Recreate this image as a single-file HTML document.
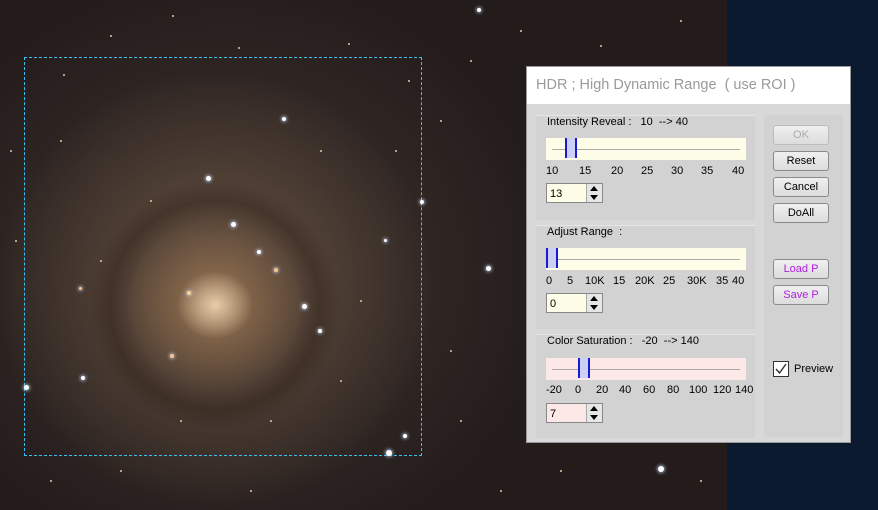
<!DOCTYPE html>
<html><head><meta charset="utf-8"><style>
body{margin:0;width:878px;height:510px;overflow:hidden;position:relative;font-family:"Liberation Sans",sans-serif;}
#bg{position:absolute;left:0;top:0;width:727px;height:510px;background:
radial-gradient(ellipse 38px 34px at 215px 305px,rgba(240,215,180,.9),rgba(0,0,0,0)),
radial-gradient(ellipse 90px 85px at 215px 305px,rgba(165,125,85,.75),rgba(0,0,0,0)),
radial-gradient(circle 140px at 215px 305px,rgba(0,0,0,0) 60%,rgba(40,25,18,.35) 75%,rgba(0,0,0,0) 90%),
radial-gradient(ellipse 220px 220px at 215px 290px,rgba(120,95,72,.7),rgba(0,0,0,0)),
radial-gradient(ellipse 330px 300px at 230px 270px,rgba(80,65,58,.7),rgba(0,0,0,0)),
#231c1b;}
#right{position:absolute;left:727px;top:0;width:151px;height:510px;background:#0b1a2e;}
#roi{position:absolute;left:24px;top:57px;width:396px;height:397px;border:1px dashed #3ac0f0;}
.s{position:absolute;border-radius:50%;background:#fff;box-shadow:0 0 3px 1px rgba(200,220,255,.7);}
.d{position:absolute;width:2px;height:2px;border-radius:50%;background:#e8c8a0;}
#dlg{position:absolute;left:526px;top:66px;width:325px;height:377px;background:#d8d8d8;border:1px solid #999;box-sizing:border-box;font-size:11px;color:#000;}
#title{position:absolute;left:0;top:0;width:100%;height:37px;background:#fff;color:#9a9a9a;font-size:14.5px;line-height:37px;padding-left:9px;box-sizing:border-box;}
.grp{position:absolute;left:9px;width:219px;background:#d2d2d2;border-top:1px solid #e6e6e6;}
.lbl{position:absolute;left:11px;top:0px;font-size:11px;}
.trk{position:absolute;left:10px;width:200px;height:22px;}
.trk .ln{position:absolute;left:6px;right:6px;top:11px;height:1px;background:#aaa;}
.trk .th{position:absolute;top:0;width:8px;height:20px;background:#cdd0f5;border-left:2px solid #1a1ad0;border-right:2px solid #1a1ad0;}
.nums{position:absolute;left:10px;width:200px;font-size:11px;}
.nums span{position:absolute;}
.spin{position:absolute;left:10px;width:57px;height:20px;border:1px solid #888;font-size:11px;line-height:20px;padding-left:3px;box-sizing:border-box;}
.spin .b{position:absolute;right:0;top:0;width:15px;height:18px;background:#e6e6e6;border-left:1px solid #aaa;}
.spin .b:before{content:"";position:absolute;left:3px;top:2px;border:4px solid transparent;border-bottom:5px solid #000;border-top:0;}
.spin .b:after{content:"";position:absolute;left:3px;top:11px;border:4px solid transparent;border-top:5px solid #000;border-bottom:0;}
#rp{position:absolute;left:237px;top:48px;width:79px;height:322px;background:#d2d2d2;}
.btn{position:absolute;left:9px;width:54px;height:18px;border:1px solid #8a8a8a;border-radius:3px;background:linear-gradient(#f0f0f0,#dcdcdc);text-align:center;line-height:18px;font-size:11px;}
</style></head><body>
<div id="bg"></div><div id="right"></div>
<div id="roi"></div>
<div class="s" style="left:206px;top:176px;width:5px;height:5px"></div>
<div class="s" style="left:231px;top:222px;width:5px;height:5px"></div>
<div class="s" style="left:257px;top:250px;width:4px;height:4px"></div>
<div class="s" style="left:302px;top:304px;width:5px;height:5px"></div>
<div class="s" style="left:24px;top:385px;width:5px;height:5px"></div>
<div class="s" style="left:386px;top:450px;width:6px;height:6px"></div>
<div class="s" style="left:486px;top:266px;width:5px;height:5px"></div>
<div class="s" style="left:658px;top:466px;width:6px;height:6px"></div>
<div class="s" style="left:477px;top:8px;width:4px;height:4px"></div>
<div class="s" style="left:420px;top:200px;width:4px;height:4px"></div>
<div class="s" style="left:282px;top:117px;width:4px;height:4px"></div>
<div class="s" style="left:318px;top:329px;width:4px;height:4px"></div>
<div class="s" style="left:403px;top:434px;width:4px;height:4px"></div>
<div class="s" style="left:384px;top:239px;width:3px;height:3px"></div>
<div class="s" style="left:81px;top:376px;width:4px;height:4px"></div>
<div class="s" style="left:170px;top:354px;width:4px;height:4px;background:#ffc080"></div>
<div class="s" style="left:274px;top:268px;width:4px;height:4px;background:#ffc080"></div>
<div class="s" style="left:187px;top:291px;width:4px;height:4px;background:#ffd090"></div>
<div class="s" style="left:79px;top:287px;width:3px;height:3px;background:#ffc080"></div>
<div class="d" style="left:63px;top:74px"></div><div class="d" style="left:110px;top:35px"></div><div class="d" style="left:172px;top:15px"></div>
<div class="d" style="left:238px;top:47px"></div><div class="d" style="left:348px;top:43px"></div><div class="d" style="left:408px;top:80px"></div>
<div class="d" style="left:440px;top:120px"></div><div class="d" style="left:470px;top:60px"></div><div class="d" style="left:520px;top:30px"></div>
<div class="d" style="left:600px;top:45px"></div><div class="d" style="left:680px;top:20px"></div><div class="d" style="left:700px;top:480px"></div>
<div class="d" style="left:560px;top:470px"></div><div class="d" style="left:500px;top:490px"></div><div class="d" style="left:450px;top:350px"></div>
<div class="d" style="left:460px;top:420px"></div><div class="d" style="left:15px;top:240px"></div><div class="d" style="left:10px;top:150px"></div>
<div class="d" style="left:50px;top:480px"></div><div class="d" style="left:120px;top:470px"></div><div class="d" style="left:250px;top:490px"></div>
<div class="d" style="left:320px;top:150px"></div><div class="d" style="left:150px;top:200px"></div><div class="d" style="left:100px;top:260px"></div>
<div class="d" style="left:340px;top:380px"></div><div class="d" style="left:270px;top:420px"></div><div class="d" style="left:180px;top:420px"></div>
<div class="d" style="left:360px;top:300px"></div><div class="d" style="left:395px;top:150px"></div><div class="d" style="left:60px;top:140px"></div>
<div id="dlg">
<div id="title">HDR ; High Dynamic Range &nbsp;( use ROI )</div>
<div class="grp" style="top:48px;height:104px">
 <div class="lbl">Intensity Reveal : &nbsp;&nbsp;10 &nbsp;--&gt; 40</div>
 <div class="trk" style="top:22px;background:#fdfde8"><div class="ln"></div><div class="th" style="left:19px"></div></div>
 <div class="nums" style="top:49px"><span style="left:0">10</span><span style="left:33px">15</span><span style="left:65px">20</span><span style="left:95px">25</span><span style="left:125px">30</span><span style="left:155px">35</span><span style="left:186px">40</span></div>
 <div class="spin" style="top:67px;background:#fdfde8">13<div class="b"></div></div>
</div>
<div class="grp" style="top:158px;height:103px">
 <div class="lbl">Adjust Range &nbsp;:</div>
 <div class="trk" style="top:22px;background:#fdfde8"><div class="ln"></div><div class="th" style="left:0"></div></div>
 <div class="nums" style="top:49px"><span style="left:0">0</span><span style="left:21px">5</span><span style="left:39px">10K</span><span style="left:67px">15</span><span style="left:89px">20K</span><span style="left:117px">25</span><span style="left:141px">30K</span><span style="left:170px">35</span><span style="left:186px">40</span></div>
 <div class="spin" style="top:67px;background:#fdfde8">0<div class="b"></div></div>
</div>
<div class="grp" style="top:267px;height:103px">
 <div class="lbl">Color Saturation : &nbsp;&nbsp;-20 &nbsp;--&gt; 140</div>
 <div class="trk" style="top:23px;background:#fde8e8"><div class="ln"></div><div class="th" style="left:32px"></div></div>
 <div class="nums" style="top:49px"><span style="left:0">-20</span><span style="left:29px">0</span><span style="left:50px">20</span><span style="left:73px">40</span><span style="left:97px">60</span><span style="left:121px">80</span><span style="left:143px">100</span><span style="left:167px">120</span><span style="left:189px">140</span></div>
 <div class="spin" style="top:68px;background:#fde8e8">7<div class="b"></div></div>
</div>
<div id="rp">
 <div class="btn" style="top:10px;color:#aaa;border-color:#bbb">OK</div>
 <div class="btn" style="top:36px">Reset</div>
 <div class="btn" style="top:62px">Cancel</div>
 <div class="btn" style="top:88px">DoAll</div>
 <div class="btn" style="top:144px;color:#b020e0">Load P</div>
 <div class="btn" style="top:170px;color:#b020e0">Save P</div>
 <div style="position:absolute;left:9px;top:246px;width:14px;height:14px;border:1px solid #333;background:#fff"><svg width="14" height="14"><path d="M2 7 L5.5 11 L12 2" fill="none" stroke="#333" stroke-width="1.4"/></svg></div>
 <div style="position:absolute;left:30px;top:248px;font-size:11px">Preview</div>
</div>
</div>
</body></html>
